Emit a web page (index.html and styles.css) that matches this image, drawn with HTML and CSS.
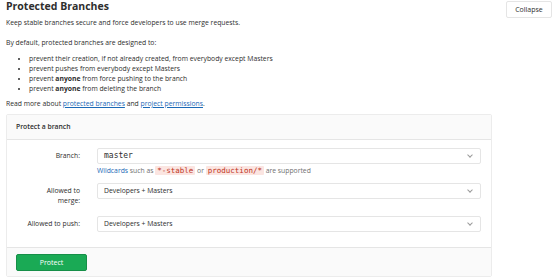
FILE: index.html
```html
<!DOCTYPE html>
<html lang="en">
<head>
  <meta charset="UTF-8">
  <title>Protected Branches</title>
  <link rel="stylesheet" href="styles.css">
</head>
<body>

<section class="settings">
  <div class="settings-header">
    <div>
      <h4>Protected Branches</h4>
      <p class="lead">Keep stable branches secure and force developers to use merge requests.</p>
    </div>
    <button class="btn btn-default">Collapse</button>
  </div>

  <div class="settings-content">
    <p class="intro">By default, protected branches are designed to:</p>
    <ul>
      <li>prevent their creation, if not already created, from everybody except Masters</li>
      <li>prevent pushes from everybody except Masters</li>
      <li>prevent <strong>anyone</strong> from force pushing to the branch</li>
      <li>prevent <strong>anyone</strong> from deleting the branch</li>
    </ul>
    <p class="more">Read more about <a href="#">protected branches</a> and <a href="#">project permissions</a>.</p>

    <form class="panel">
      <div class="panel-heading">Protect a branch</div>
      <div class="panel-body">
        <div class="form-group">
          <label class="control-label">Branch:</label>
          <div class="controls">
            <div class="dropdown mono">master<span class="caret"></span></div>
            <p class="help">
              <a href="#">Wildcards</a> such as <code>*-stable</code> or <code>production/*</code> are supported
            </p>
          </div>
        </div>
        <div class="form-group">
          <label class="control-label">Allowed to<br>merge:</label>
          <div class="controls">
            <div class="dropdown">Developers + Masters<span class="caret"></span></div>
          </div>
        </div>
        <div class="form-group">
          <label class="control-label">Allowed to push:</label>
          <div class="controls">
            <div class="dropdown">Developers + Masters<span class="caret"></span></div>
          </div>
        </div>
      </div>
      <div class="panel-footer">
        <button type="button" class="btn btn-create">Protect</button>
      </div>
    </form>
  </div>
</section>

</body>
</html>
```

FILE: styles.css
```css
body {
  margin: 0;
  font-family: "Open Sans", sans-serif;
  font-size: 6.8px;
  line-height: 10px;
  color: #2e2e2e;
  background: #fff;
}

.settings {
  padding: 0 2px 0 6px;
}

.settings-header {
  display: flex;
  justify-content: space-between;
  align-items: flex-start;
}

h4 {
  margin: 0;
  font-size: 10.5px;
  line-height: 13px;
  font-weight: 700;
  color: #2e2e2e;
}

.lead {
  margin: 5px 0 0;
}

.btn {
  font-family: "Open Sans", sans-serif;
  font-size: 7px;
  line-height: 10px;
  border-radius: 2px;
  cursor: pointer;
}

.btn-default {
  margin-top: 1px;
  width: 46px;
  height: 17px;
  padding: 0;
  background: #fff;
  border: 1px solid #e5e5e5;
  color: #2e2e2e;
}

.settings-content {
  margin-right: 60px;
}

.intro {
  margin: 10px 0 0;
}

ul {
  margin: 6px 0 0;
  padding-left: 23px;
}

ul li::marker {
  font-size: 6px;
}

strong {
  font-weight: 700;
}

.more {
  margin: 5px 0 0;
}

a {
  color: #1b69b6;
  text-decoration: underline;
}

.panel {
  margin-top: 5px;
  border: 1px solid #ececec;
  border-radius: 2px;
}

.panel-heading {
  height: 24px;
  line-height: 24px;
  padding: 0 9px;
  background: #fafafa;
  border-bottom: 1px solid #e5e5e5;
  font-weight: 600;
}

.panel-body {
  padding: 8px 10px 7px 0;
}

.form-group {
  display: flex;
  margin-bottom: 8px;
}

.control-label {
  width: 73px;
  flex: none;
  text-align: right;
  padding: 3px 0 2px;
  color: #2e2e2e;
}

.controls {
  flex: 1;
  margin-left: 17px;
}

.dropdown {
  position: relative;
  height: 16px;
  box-sizing: border-box;
  border: 1px solid #e5e5e5;
  border-radius: 2px;
  padding: 0 6px;
  line-height: 14px;
  color: #2e2e2e;
}

.mono {
  font-family: "DejaVu Sans Mono", monospace;
  font-size: 8px;
}

.caret {
  position: absolute;
  right: 8px;
  top: 4px;
  width: 3px;
  height: 3px;
  border-right: 1px solid #9a9a9a;
  border-bottom: 1px solid #9a9a9a;
  transform: rotate(45deg);
}

.help {
  margin: 2px 0 0;
  line-height: 9px;
  color: #707070;
}

.help a {
  text-decoration: none;
}

code {
  font-family: "DejaVu Sans Mono", monospace;
  font-size: 7.5px;
  padding: 0 2px;
  color: #c0341d;
  background: #fbe5e1;
  border-radius: 1px;
}

.panel-footer {
  padding: 6px 9px 5px;
  background: #fafafa;
  border-top: 1px solid #e5e5e5;
}

.btn-create {
  width: 71px;
  height: 17px;
  padding: 0;
  color: #fff;
  background: #1aaa55;
  border: 1px solid #168f48;
}
```
